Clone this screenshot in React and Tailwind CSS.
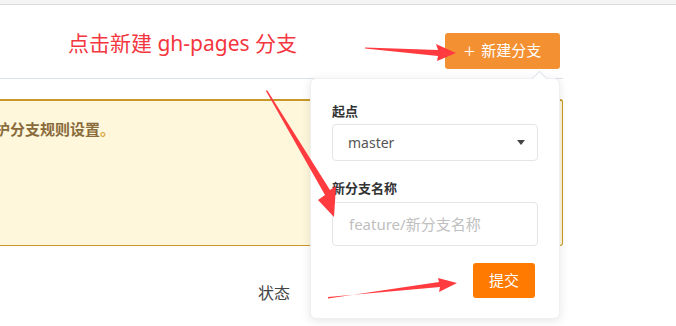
import React from 'react';

const font = { fontFamily: '"Noto Sans", "Noto Sans CJK SC", sans-serif' };

const Arrows = () => (
    <svg className="absolute inset-0 pointer-events-none" width="676" height="326" viewBox="0 0 676 326">
        {/* to the new-branch button */}
        <polygon fill="#ff3b3f" points="365,47.5 438,50 436,44 456,53 437,61 438,56 365,48.5" />
        {/* to the branch name input */}
        <polygon fill="#ff3b3f" points="267,90 330,190 336,186 334,217 318,200 325,195 266,91" />
        {/* to the submit button */}
        <polygon fill="#ff3b3f" points="328,297 440,287 439,292 457,283 438,278 439,282 328,298.5" />
    </svg>
);

const BranchPopover = () => (
    <div className="absolute left-[310px] top-[78px] w-[250px] h-[241px] bg-white rounded-md shadow-[0_2px_10px_rgba(0,0,0,0.1)] border border-[#eef0f3] px-[21px] pt-[24px]">
        {/* little pointer */}
        <div className="absolute -top-[6px] right-[14px] w-[11px] h-[11px] bg-white border-l border-t border-[#dfe3e9] rotate-45"></div>

        <div className="text-[13px] font-bold text-[#333] leading-[16px]">起点</div>
        <div className="mt-[5px] h-[37px] border border-[#e3e5e8] rounded-[4px] flex items-center pl-[15px] pr-[12px]">
            <span className="text-[14px] text-[#555]">master</span>
            <span className="ml-auto w-0 h-0 border-l-[4px] border-r-[4px] border-t-[5px] border-l-transparent border-r-transparent border-t-[#444]"></span>
        </div>

        <div className="mt-[19px] text-[13px] font-bold text-[#333] leading-[16px]">新分支名称</div>
        <div className="mt-[6px] h-[44px] border border-[#e3e5e8] rounded-[4px] flex items-center pl-[16px]">
            <span className="text-[15px] text-[#c0c0c0]">feature/新分支名称</span>
        </div>

        <div className="mt-[17px] flex justify-end pr-[3px]">
            <button className="w-[62px] h-[35px] bg-[#ff7a00] rounded-[3px] text-white text-[15px]">提交</button>
        </div>
    </div>
);

const App = () => {
    return (
        <main className="relative w-[676px] h-[326px] overflow-hidden bg-white" style={font}>
            <div className="h-[5px] bg-[#f4f4f4] border-b border-[#dcdcdc]"></div>

            <header className="h-[74px] w-[563px] border-b border-[#dde2e9] flex items-center pl-[68px] pr-[3px]">
                <span className="text-[21px] text-[#f4363f] leading-none mt-[3px]">点击新建 gh-pages 分支</span>
                <button className="ml-auto w-[115px] h-[36px] bg-[#f39132] rounded-[3px] text-white text-[15px] flex items-center justify-center gap-[6px] mt-[18px]">
                    <span className="text-[20px] font-light leading-none">+</span>
                    <span>新建分支</span>
                </button>
            </header>

            <section className="pt-[20px]">
                <div className="-ml-[4px] w-[567px] h-[147px] bg-[#fef7db] border border-[#c8982a] border-t-[2px] rounded-[3px] pt-[17px]">
                    <p className="-ml-[2px] text-[15px] font-bold text-[#8a6b3c]">护分支规则设置<span className="text-[#d9a441]">。</span></p>
                </div>
                <div className="mt-[35px] pl-[258px] text-[16px] text-[#444]">状态</div>
            </section>

            <BranchPopover />
            <Arrows />
        </main>
    );
};

export default App;
